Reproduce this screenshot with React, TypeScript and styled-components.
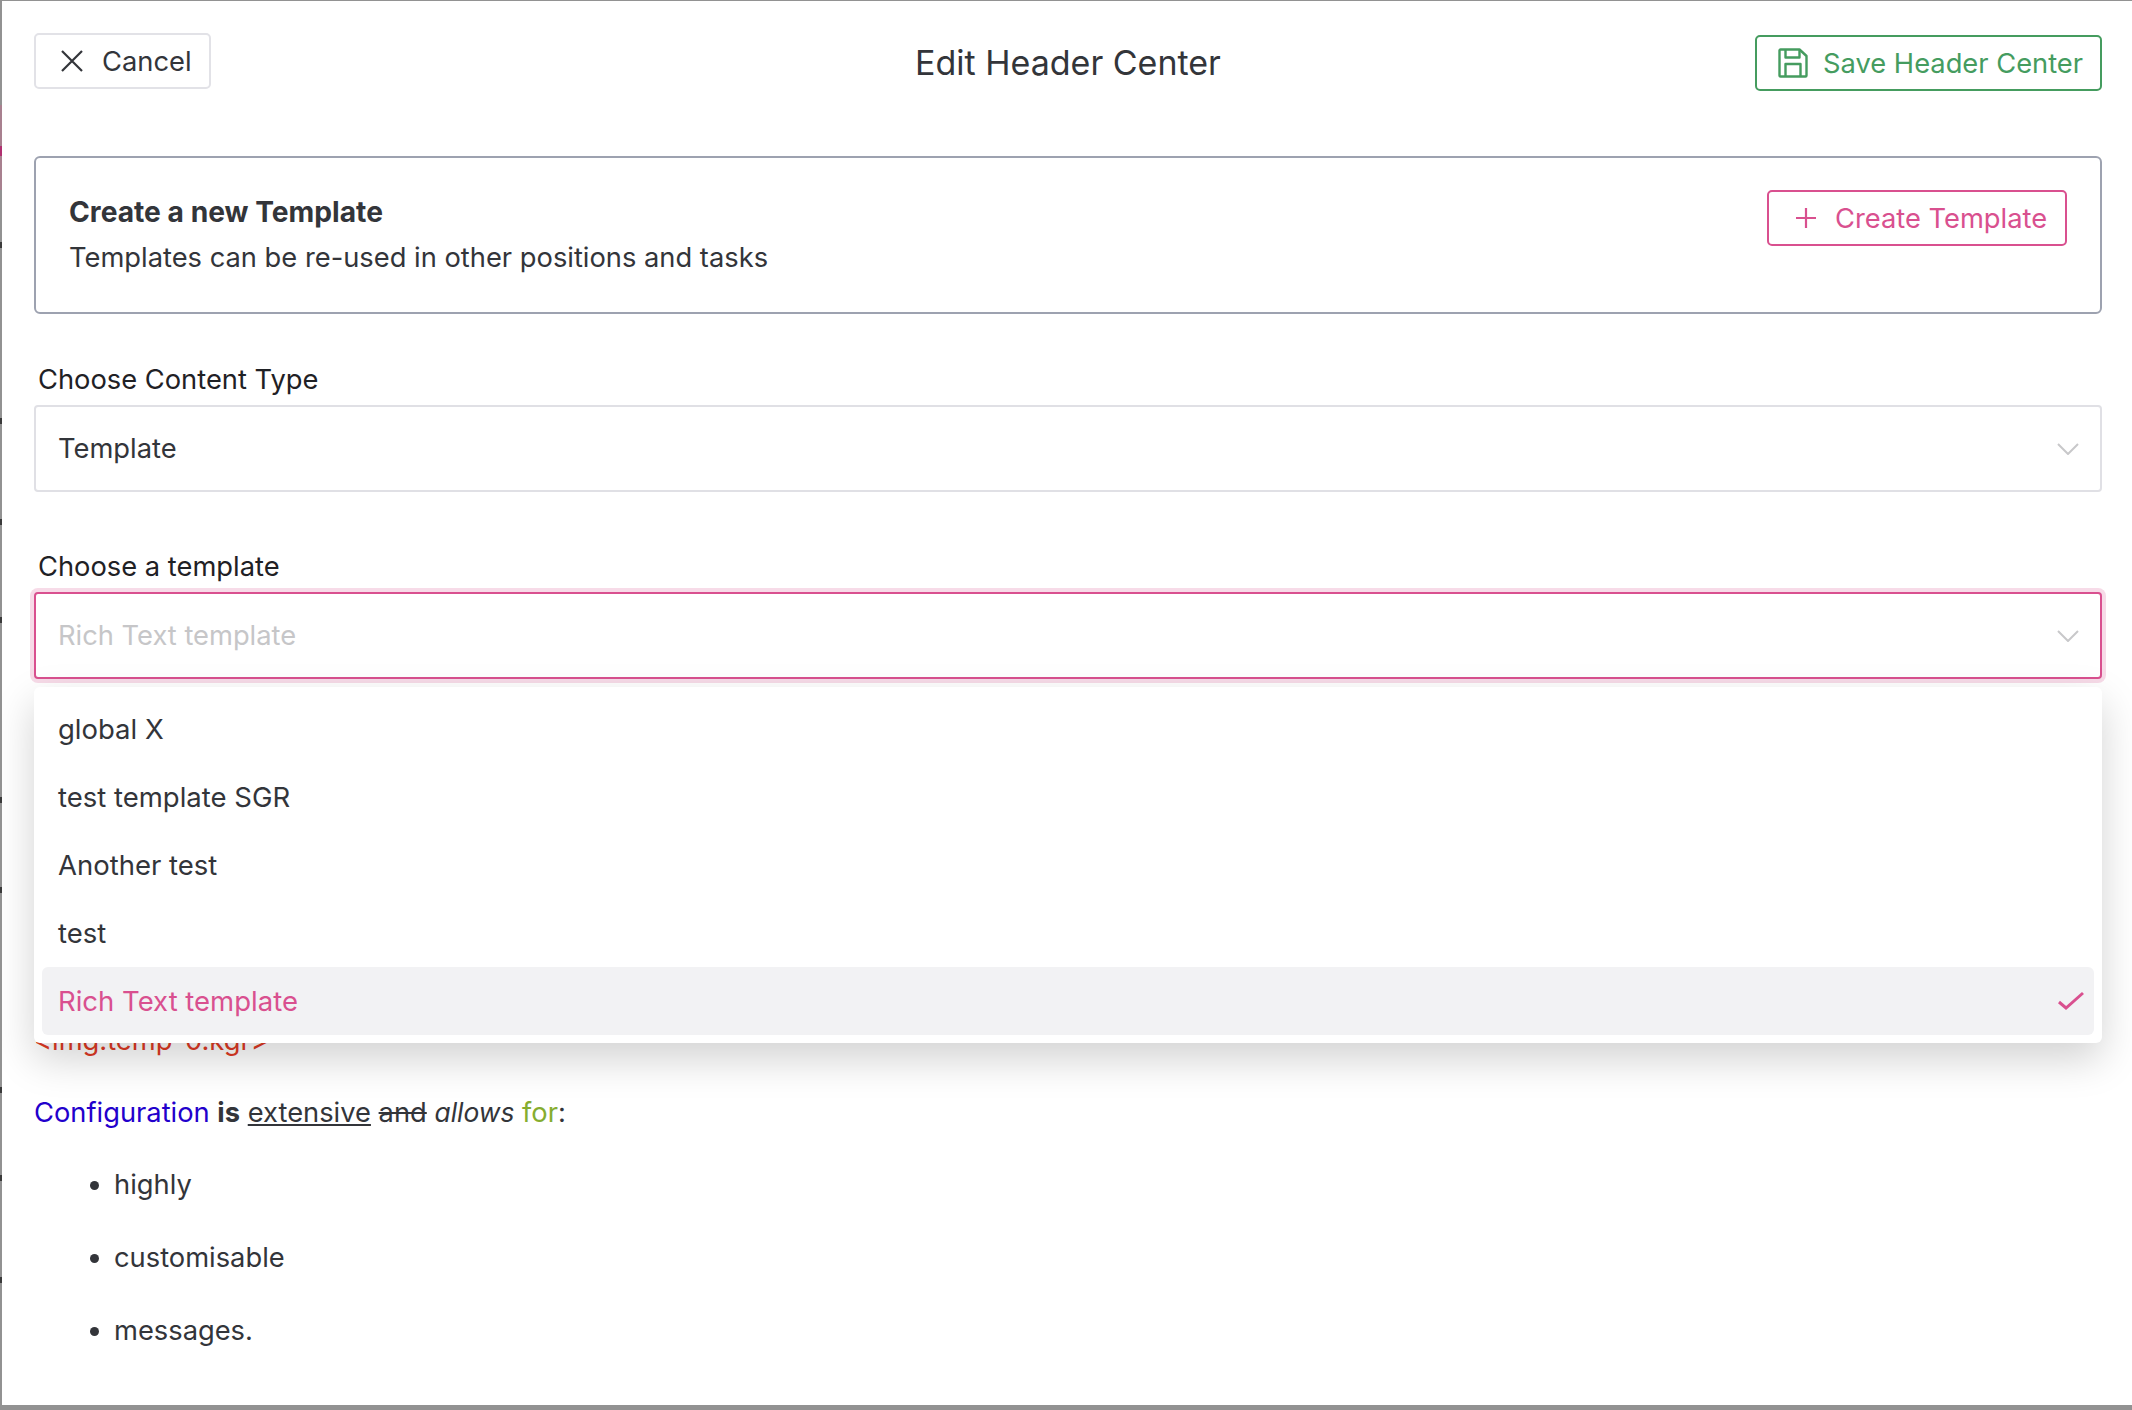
import React from 'react';
import styled, { createGlobalStyle } from 'styled-components';

const Global = createGlobalStyle`
  html, body { margin: 0; padding: 0; height: 100%; }
  body { font-family: Inter, "Liberation Sans", sans-serif; background: #8f8f8f; }
  * { box-sizing: border-box; }
`;

const Backdrop = styled.div`
  position: relative;
  width: 2132px;
  height: 1410px;
  padding: 1px 0 5px 2px;
  overflow: hidden;
  background: #929292;
`;

const EdgeMarks = styled.svg`
  position: absolute;
  left: 0;
  top: 0;
`;

const Modal = styled.div`
  height: 100%;
  background: #fff;
  padding: 32px 30px 0 32px;
  color: #33353a;
  font-size: 27.3px;
  overflow: hidden;
`;

const Header = styled.header`
  display: grid;
  grid-template-columns: 1fr auto 1fr;
  align-items: start;
  height: 123px;
`;

const Title = styled.h1`
  margin: 8px 0 0;
  font-size: 34px;
  line-height: 44px;
  font-weight: 400;
  color: #33353a;
`;

const Button = styled.button<{ $tone: string; $w: number; $h: number; $gap: number; $pl: number }>`
  display: inline-flex;
  align-items: center;
  gap: ${p => p.$gap}px;
  width: ${p => p.$w}px;
  height: ${p => p.$h}px;
  padding: 0 0 0 ${p => p.$pl}px;
  background: #fff;
  border: 2px solid ${p => p.$tone};
  border-radius: 5px;
  color: ${p => p.$tone};
  font: inherit;
  font-size: 27.3px;
  white-space: nowrap;
  cursor: pointer;
`;

const CancelButton = styled(Button)`
  border-color: #e2e2e7;
  color: #33353a;
  justify-self: start;
`;

const SaveButton = styled(Button)`
  justify-self: end;
  margin-top: 2px;
`;

const CreateCard = styled.section`
  display: flex;
  justify-content: space-between;
  align-items: flex-start;
  height: 158px;
  padding: 32px 33px 0;
  border: 2px solid #9da2b0;
  border-radius: 6px;
`;

const CardTitle = styled.div`
  font-weight: 700;
  font-size: 28.2px;
  line-height: 45px;
`;

const CardText = styled.div`
  line-height: 45px;
`;

const Field = styled.div<{ $top: number }>`
  position: relative;
  margin-top: ${p => p.$top}px;
`;

const Label = styled.label`
  display: block;
  padding-left: 4px;
  height: 44px;
  line-height: 38px;
  color: #1f2125;
`;

const Select = styled.div<{ $open?: boolean }>`
  display: flex;
  align-items: center;
  justify-content: space-between;
  height: 87px;
  padding: 0 21px 0 22px;
  background: #fff;
  border: 2px solid ${p => (p.$open ? '#d9508f' : '#e0e0e5')};
  border-radius: 4px;
  box-shadow: ${p => (p.$open ? '0 0 0 4px #f7dbe8' : 'none')};
  color: ${p => (p.$open ? '#c6c6c8' : '#33353a')};
`;

const Menu = styled.ul`
  position: absolute;
  left: 0;
  right: 0;
  top: 139px;
  margin: 0;
  padding: 8px;
  list-style: none;
  background: #fff;
  border-radius: 6px;
  box-shadow: 0 16px 40px rgba(0, 0, 0, 0.18);
  z-index: 2;
`;

const Option = styled.li<{ $selected?: boolean }>`
  display: flex;
  align-items: center;
  justify-content: space-between;
  height: 68px;
  padding: 0 10px 0 16px;
  border-radius: 6px;
  font-size: 27.5px;
  background: ${p => (p.$selected ? '#f2f2f4' : 'transparent')};
  color: ${p => (p.$selected ? '#d9508f' : '#33353a')};
`;

const RichText = styled.article`
  padding-top: 342px;
  line-height: 40px;
`;

const Para = styled.p<{ $color?: string; $gap: number }>`
  margin: 0 0 ${p => p.$gap}px;
  color: ${p => p.$color || 'inherit'};
`;

const Blue = styled.span`color: #2200cc;`;
const Green = styled.span`color: #86ad2f;`;
const Slanted = styled.i`font-size: 26.4px;`;

const Bullets = styled.ul`
  margin: 32px 0 0;
  padding-left: 80px;
`;

const Bullet = styled.li`
  margin-bottom: 33px;
`;

const XIcon = () => (
  <svg width="22" height="22" viewBox="0 0 22 22" fill="none" stroke="currentColor" strokeWidth="2.2">
    <path d="M1 1l20 20M21 1L1 21" />
  </svg>
);

const PlusIcon = () => (
  <svg width="22" height="22" viewBox="0 0 22 22" fill="none" stroke="currentColor" strokeWidth="2.2">
    <path d="M11 1v20M1 11h20" />
  </svg>
);

const SaveIcon = () => (
  <svg width="30" height="30" viewBox="0 0 30 30" fill="none" stroke="currentColor" strokeWidth="2.4" strokeLinejoin="round">
    <path d="M1.5 2.5a1 1 0 0 1 1-1h19l7 6.5v19.5a1 1 0 0 1-1 1h-25a1 1 0 0 1-1-1z" />
    <path d="M7.5 1.5v8h14v-8" />
    <path d="M7.5 28.5V16h15v12.5" />
  </svg>
);

const Chevron = () => (
  <svg width="22" height="12" viewBox="0 0 22 12" fill="none" stroke="#c8c8ca" strokeWidth="2">
    <path d="M1 1l10 10L21 1" />
  </svg>
);

const Check = () => (
  <svg width="26" height="20" viewBox="0 0 26 20" fill="none" stroke="#d9508f" strokeWidth="3">
    <path d="M1 11l7 6L25 2" />
  </svg>
);

const options = ['global X', 'test template SGR', 'Another test', 'test', 'Rich Text template'];
const marks = [245, 421, 522, 620, 800, 890, 1090, 1178, 1280];

export default function App() {
  return (
    <>
      <Global />
      <Backdrop>
        <EdgeMarks width="2" height="1410" viewBox="0 0 2 1410">
          <rect x="0" y="105" width="2" height="85" fill="#a8808f" />
          <rect x="0" y="146" width="2" height="10" fill="#b03070" />
          {marks.map(y => (
            <rect key={y} x="0" y={y - 3} width="2" height="6" fill="#3a3a3a" />
          ))}
        </EdgeMarks>
        <Modal>
          <Header>
            <CancelButton $tone="#33353a" $w={177} $h={56} $gap={19} $pl={25}>
              <XIcon />
              Cancel
            </CancelButton>
            <Title>Edit Header Center</Title>
            <SaveButton $tone="#459c5f" $w={347} $h={56} $gap={15} $pl={21}>
              <SaveIcon />
              Save Header Center
            </SaveButton>
          </Header>
          <CreateCard>
            <div>
              <CardTitle>Create a new Template</CardTitle>
              <CardText>Templates can be re-used in other positions and tasks</CardText>
            </div>
            <Button $tone="#d9508f" $w={300} $h={56} $gap={18} $pl={26}>
              <PlusIcon />
              Create Template
            </Button>
          </CreateCard>
          <Field $top={47}>
            <Label>Choose Content Type</Label>
            <Select>
              Template
              <Chevron />
            </Select>
          </Field>
          <Field $top={56}>
            <Label>Choose a template</Label>
            <Select $open>
              Rich Text template
              <Chevron />
            </Select>
            <Menu>
              {options.map((o, i) => (
                <Option key={o} $selected={i === 4}>
                  {o}
                  {i === 4 && <Check />}
                </Option>
              ))}
            </Menu>
          </Field>
          <RichText>
            <Para $color="#e03a24" $gap={31}>&lt;img.temp-0.kgr&gt;</Para>
            <Para $gap={0}>
              <Blue>Configuration</Blue> <b>is</b> <u>extensive</u> <s>and</s> <Slanted>allows</Slanted> <Green>for</Green>:
            </Para>
            <Bullets>
              <Bullet>highly</Bullet>
              <Bullet>customisable</Bullet>
              <Bullet>messages.</Bullet>
            </Bullets>
          </RichText>
        </Modal>
      </Backdrop>
    </>
  );
}
